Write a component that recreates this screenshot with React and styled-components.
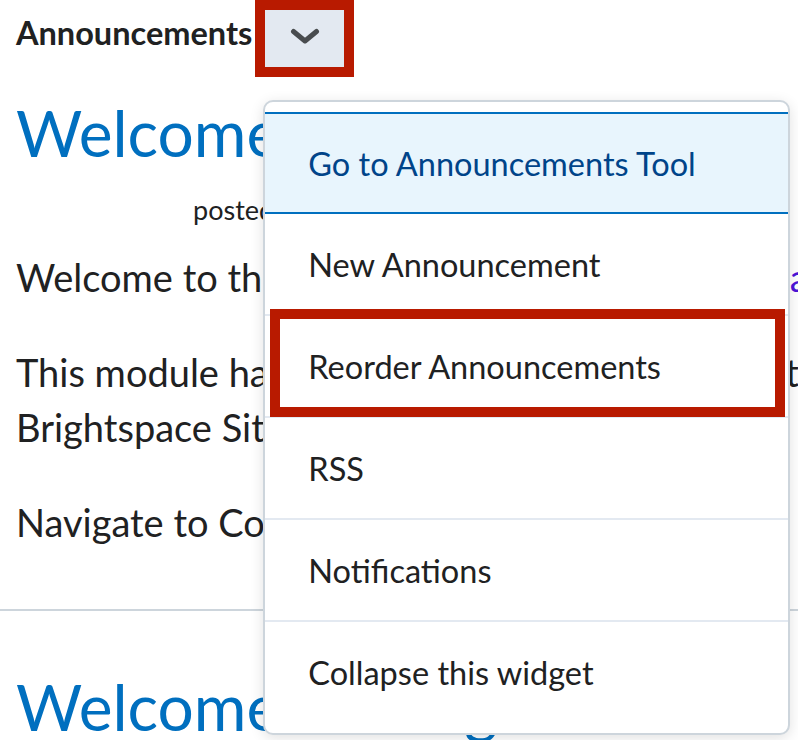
import React from 'react';
import styled, { createGlobalStyle } from 'styled-components';

const GlobalStyle = createGlobalStyle`
  html, body {
    margin: 0;
    padding: 0;
    overflow: hidden;
    background: #ffffff;
  }
  body {
    font-family: Lato, "Noto Sans", "Liberation Sans", sans-serif;
    color: #202122;
  }
`;

const menuItems = [
  { label: 'Go to Announcements Tool', active: true },
  { label: 'New Announcement' },
  { label: 'Reorder Announcements', marked: true },
  { label: 'RSS' },
  { label: 'Notifications' },
  { label: 'Collapse this widget' },
];

const Chevron = () => (
  <svg width="30" height="17" viewBox="0 0 30 17" aria-hidden="true">
    <path
      d="M3.5 3.5 L15 13 L26.5 3.5"
      fill="none"
      stroke="#494c4f"
      strokeWidth="5"
      strokeLinecap="round"
      strokeLinejoin="round"
    />
  </svg>
);

const App = () => (
  <Page>
    <GlobalStyle />
    <Widget>
      <Header>
        <Title>Announcements</Title>
        <DropdownWrap>
          <Marked>
            <MenuButton type="button" aria-label="Actions for Announcements">
              <Chevron />
            </MenuButton>
          </Marked>
          <Menu role="menu">
            {menuItems.map(({ label, active, marked }) => (
              <MenuItem key={label} role="menuitem" $active={active}>
                {label}
                {marked && <ItemMark />}
              </MenuItem>
            ))}
          </Menu>
        </DropdownWrap>
      </Header>

      <Post $first>
        <PostTitle>Welcome to Brightspace!</PostTitle>
        <Meta>posted Aug 14, 2023 at 9:00 AM</Meta>
        <Para>
          Welcome to the Brightspace Training Sandbox <Link>a space to practice</Link>
        </Para>
        <Para>
          This module has been made to introduce your team to the
          <br />
          Brightspace Site and its tools.
        </Para>
        <Para>Navigate to Content to get started.</Para>
      </Post>

      <Post>
        <PostTitle>Welcome to Biogenesis</PostTitle>
      </Post>
    </Widget>
  </Page>
);

export default App;

const Page = styled.div`
  width: 1120px;
`;

const Widget = styled.section`
  display: flex;
  flex-direction: column;
`;

const Header = styled.div`
  display: flex;
  align-items: flex-start;
  padding: 0 16px;
  height: 77px;
`;

const Title = styled.h2`
  margin: 13px 3px 0 0;
  font-size: 32.5px;
  font-weight: 700;
  line-height: 1.2;
  color: #202122;
`;

const DropdownWrap = styled.div`
  position: relative;
`;

const Marked = styled.div`
  border: 10px solid #b81a00;
`;

const MenuButton = styled.button`
  display: flex;
  align-items: center;
  justify-content: center;
  width: 79px;
  height: 57px;
  padding: 0 0 4px;
  border: none;
  background: #e3e9f1;
  cursor: pointer;
`;

const Menu = styled.ul`
  position: absolute;
  top: 100px;
  left: 8px;
  z-index: 2;
  width: 523px;
  margin: 0;
  padding: 10px 0 9px;
  list-style: none;
  background: #ffffff;
  border: 2px solid #cdd5dc;
  border-radius: 10px;
  box-shadow: 0 3px 14px rgba(0, 0, 0, 0.12);
`;

const MenuItem = styled.li`
  position: relative;
  display: flex;
  align-items: center;
  height: ${({ $active }) => ($active ? '98px' : '100px')};
  padding: 0 43px;
  font-size: 32.5px;
  white-space: nowrap;
  color: ${({ $active }) => ($active ? '#004489' : '#202122')};
  background: ${({ $active }) => ($active ? '#e8f5fd' : '#ffffff')};
  border-top: ${({ $active }) => ($active ? '2px solid #006fbf' : 'none')};
  border-bottom: 2px solid ${({ $active }) => ($active ? '#006fbf' : '#e3e9f1')};

  &:last-child {
    border-bottom-color: transparent;
  }
`;

const ItemMark = styled.span`
  position: absolute;
  top: -7px;
  bottom: -1px;
  left: 5px;
  right: 3px;
  border: 10px solid #b81a00;
  pointer-events: none;
`;

const Post = styled.article`
  padding: ${({ $first }) => ($first ? '18px' : '58px')} 16px 59px;
  border-bottom: 2px solid #cdd5dc;

  &:last-child {
    border-bottom: none;
  }
`;

const PostTitle = styled.h1`
  margin: 0;
  font-size: 64px;
  font-weight: 400;
  line-height: 1.2;
  color: #006fbf;
  white-space: nowrap;
`;

const Meta = styled.div`
  margin: 20px 0 23px 177px;
  font-size: 27px;
  line-height: 1.3;
  color: #202122;
`;

const Para = styled.p`
  margin: 0 0 40px;
  font-size: 38px;
  line-height: 55px;
  white-space: nowrap;

  &:last-child {
    margin-bottom: 0;
  }
`;

const Link = styled.a`
  color: #4d14d9;
  text-decoration: none;
`;
